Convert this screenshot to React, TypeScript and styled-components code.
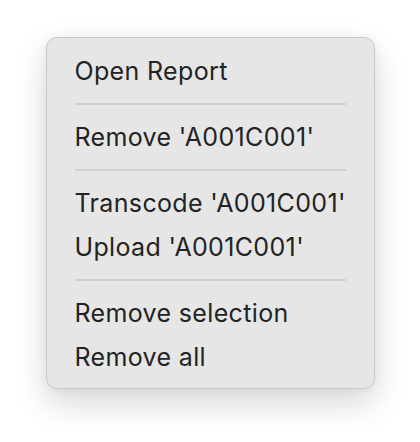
import * as React from 'react';
import styled, { createGlobalStyle } from 'styled-components';

const GlobalStyle = createGlobalStyle`
  html, body {
    margin: 0;
    padding: 0;
    background: #ffffff;
  }
`;

const Page = styled.div`
  display: flex;
  justify-content: center;
  align-items: flex-start;
  padding-top: 37px;
  width: 420px;
  height: 442px;
  box-sizing: border-box;
`;

const Menu = styled.div`
  width: 329px;
  box-sizing: border-box;
  padding: 11px 0 9px;
  background: #e6e6e6;
  border: 1px solid #c9c9c9;
  border-radius: 11px;
  box-shadow: 0 14px 32px rgba(0, 0, 0, 0.16), 0 0 10px rgba(0, 0, 0, 0.05);
  font-family: Inter, 'Liberation Sans', Arial, sans-serif;
  color: #232323;
`;

const Item = styled.div`
  height: 44px;
  line-height: 44px;
  padding: 0 28px;
  font-size: 25px;
  letter-spacing: 0.35px;
  white-space: nowrap;
`;

const Separator = styled.div`
  height: 22px;
  display: flex;
  align-items: center;
  padding: 0 28px;

  &::after {
    content: '';
    flex: 1;
    height: 2px;
    background: #cfcfcf;
  }
`;

const groups = [
  ['Open Report'],
  ["Remove 'A001C001'"],
  ["Transcode 'A001C001'", "Upload 'A001C001'"],
  ['Remove selection', 'Remove all'],
];

export default function App() {
  return (
    <Page>
      <GlobalStyle />
      <Menu>
        {groups.map((group, i) => (
          <React.Fragment key={i}>
            {i > 0 && <Separator />}
            {group.map((label) => (
              <Item key={label}>{label}</Item>
            ))}
          </React.Fragment>
        ))}
      </Menu>
    </Page>
  );
}
